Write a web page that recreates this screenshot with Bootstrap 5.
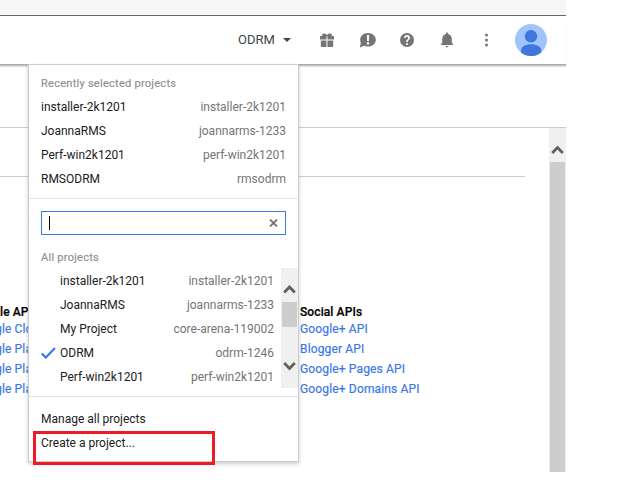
<!DOCTYPE html>
<html lang="en">
<head>
<meta charset="utf-8">
<title>API Manager</title>
<link href="https://cdn.jsdelivr.net/npm/bootstrap@5.3.0/dist/css/bootstrap.min.css" rel="stylesheet">
<style>
body{font:12px/20px Roboto,"Liberation Sans",sans-serif;color:#212121;background:#fff;overflow:hidden}
a{color:#3b78e7;text-decoration:none}
svg{display:block}
.console{width:566px;height:472px}
.browser-strip{height:16px;background:#f6f6f6;border-bottom:1px solid #666}
.topbar{height:48px;box-shadow:0 1px 0 #aaa,0 2px 0 #c4c4c4,0 3px 1px #e2e2e2;z-index:2;padding:0 19px 0 238px}
.picker{font-size:13px;color:#444;width:82px}
.caret{border:4.5px solid transparent;border-top-color:#444;border-bottom:0;margin-left:8px}
.tools{color:#757575;width:195px}
.tool{width:40px;flex:none}
.titlebar{height:64px;border-bottom:1px solid #ccc}
.pane{height:344px}
.section-rule{height:49px;width:525px;border-bottom:1px solid #ccc}
.api-lists{padding-top:128px}
.api-lists a{letter-spacing:.15px;-webkit-text-stroke:.2px #3b78e7}
.api-lists h6{font-size:12px;font-weight:500;line-height:14px;letter-spacing:.1px;color:#000;margin:0;-webkit-text-stroke:.2px #000}
.api-left{width:300px;white-space:nowrap}
.api-left a{margin-left:-5px}
.main-scroll{width:17px;background:#f0f0f0;padding:0 1px}
.thumb{background:#cdcdcd}
.main-scroll .arrow{height:34px;padding:17px 0 0 1px}
.project-menu{left:28px;top:64px;width:271px;height:398px;background:#fff;border:1px solid #ccc;box-shadow:0 2px 4px rgba(0,0,0,.2);z-index:3;line-height:24px}
.menu-label{font-size:11px;font-weight:400;letter-spacing:.27px;color:#8e8e8e;line-height:20px;-webkit-text-stroke:.15px #8e8e8e}
.recent{padding:9px 12px 7px;height:134px;border-bottom:1px solid #e5e5e5}
.recent .menu-label{margin-bottom:1px}
.pid{color:#757575}
.filter{margin:12px 12px 0;height:24px;border:1px solid #3b78e7;padding:0 7px}
.cursor{width:1px;height:14px;background:#000}
.all-label{padding:13px 12px 0;height:33px}
.all-list{height:120px}
.tick{width:31px;padding-left:12px}
.rows{padding:1px 7px 0 0}
.list-scroll{width:17px;background:#f0f0f0;padding:0 1px}
.list-scroll .thumb{height:25px}
.actions{margin-top:8px;border-top:1px solid #e5e5e5;padding:10px 12px 0}
.highlight-box{left:33px;top:431px;width:182px;height:34px;border:3px solid #ed1c24;z-index:4}
</style>
</head>
<body>
<div class="console position-relative">
  <div class="browser-strip"></div>
  <header class="topbar position-relative d-flex align-items-center bg-white">
    <div class="picker d-flex align-items-center">ODRM<span class="caret"></span></div>
    <div class="tools d-flex align-items-center">
      <div class="tool"><svg width="14" height="14" viewBox="0 0 14 14" fill="currentColor"><path d="M0 3h2.200Q1.500 1 3.500.6 5.200.3 7 2 8.800.3 10.500.6 12.500 1 11.800 3H14v3.500H7.500V3.200h-1v3.300H0zM.8 7.500h5.700V14H2Q.8 14 .8 12.800zM7.500 7.500h5.700v5.300Q13.200 14 12 14H7.500z"/></svg></div>
      <div class="tool"><svg width="16" height="16" viewBox="0.600 0 16 16"><path fill="currentColor" d="M8.600 1C13 1 16.400 3.900 16.400 7.800s-3.400 6.800-7.800 6.800c-1.500 0-2.700-.3-3.900-.8L.4 15.500l1-4.500C1 10 .8 9 .8 7.800.8 3.900 4.200 1 8.600 1z"/><path fill="#fff" d="M7.500 3h2.200l-.2 6H7.700zM7.500 10.200h2.200v2.200H7.500z"/></svg></div>
      <div class="tool"><svg width="14" height="14" viewBox="2 2 20 20" fill="currentColor"><path d="M12 2a10 10 0 1 0 0 20 10 10 0 0 0 0-20zm1.200 17.200h-2.500v-2.500h2.500zm2.070-7.950-.9.920C13.650 12.900 13.200 13.500 13.200 15h-2.500v-.5c0-1.100.450-2.100 1.170-2.830l1.240-1.260c.370-.36.590-.86.590-1.410a1.700 1.700 0 1 0-3.400 0H7.800a4.200 4.200 0 1 1 8.400 0c0 .880-.36 1.680-.93 2.250z"/></svg></div>
      <div class="tool"><svg width="14" height="16" viewBox="0 0 14 16" fill="currentColor"><path d="M7 .5c.7 0 1.100.5 1.100 1.200v.4c2.400.6 3.700 2.500 3.700 4.900v3.800L13 12v1H1v-1l1.200-1.200V7c0-2.400 1.300-4.300 3.700-4.900v-.4C5.900 1 6.300.5 7 .5zM5.500 14h3q-.2 1.300-1.500 1.300T5.500 14z"/></svg></div>
      <div class="tool ps-1"><svg width="5" height="14" viewBox="0 0 5 14" fill="currentColor"><circle cx="2.500" cy="2" r="1.500"/><circle cx="2.500" cy="7" r="1.500"/><circle cx="2.500" cy="12" r="1.500"/></svg></div>
    </div>
    <svg class="flex-shrink-0" width="32" height="32" viewBox="0 0 32 32"><circle cx="16" cy="16" r="16" fill="#9fc5fc"/><circle cx="16" cy="12.300" r="6.200" fill="#4077dd"/><path fill="#4077dd" d="M6 28.500v-2.300C6.500 22.500 10 20.300 16 20.300s9.800 2.200 10.300 5.900v2.200Q22 32 16 32T6 28.500z"/></svg>
  </header>
  <div class="titlebar"></div>
  <main class="pane d-flex">
    <div class="flex-grow-1">
      <div class="section-rule"></div>
      <div class="api-lists d-flex">
        <div class="api-left">
          <h6>le AP</h6>
          <a class="d-block" href="#">gle Clo</a><a class="d-block" href="#">gle Pla</a><a class="d-block" href="#">gle Pla</a><a class="d-block" href="#">gle Pla</a>
        </div>
        <div>
          <h6>Social APIs</h6>
          <a class="d-block" href="#">Google+ API</a><a class="d-block" href="#">Blogger API</a><a class="d-block" href="#">Google+ Pages API</a><a class="d-block" href="#">Google+ Domains API</a>
        </div>
      </div>
    </div>
    <div class="main-scroll d-flex flex-column">
      <div class="arrow"><svg width="13" height="10" viewBox="0 0 13 10"><path d="M1.200 8l5.300-5.500L11.800 8" fill="none" stroke="#606060" stroke-width="2.800"/></svg></div>
      <div class="thumb flex-grow-1"></div>
    </div>
  </main>

  <div class="project-menu position-absolute">
    <div class="recent">
      <div class="menu-label">Recently selected projects</div>
      <div class="d-flex justify-content-between"><span>installer-2k1201</span><span class="pid">installer-2k1201</span></div>
      <div class="d-flex justify-content-between"><span>JoannaRMS</span><span class="pid">joannarms-1233</span></div>
      <div class="d-flex justify-content-between"><span>Perf-win2k1201</span><span class="pid">perf-win2k1201</span></div>
      <div class="d-flex justify-content-between"><span>RMSODRM</span><span class="pid">rmsodrm</span></div>
    </div>
    <div class="filter d-flex align-items-center justify-content-between">
      <span class="cursor"></span>
      <svg width="9" height="8" viewBox="0 0 9 8"><path d="M1 .5l7 7M8 .5l-7 7" stroke="#757575" stroke-width="1.800"/></svg>
    </div>
    <div class="all-label menu-label">All projects</div>
    <div class="all-list d-flex">
      <div class="rows flex-grow-1">
        <div class="d-flex"><span class="tick"></span><span>installer-2k1201</span><span class="pid ms-auto">installer-2k1201</span></div>
        <div class="d-flex"><span class="tick"></span><span>JoannaRMS</span><span class="pid ms-auto">joannarms-1233</span></div>
        <div class="d-flex"><span class="tick"></span><span>My Project</span><span class="pid ms-auto">core-arena-119002</span></div>
        <div class="d-flex"><span class="tick d-flex align-items-center"><svg width="15" height="12" viewBox="0 0 15 12"><path d="M.8 6.500l4 4L14 1" fill="none" stroke="#3b78e7" stroke-width="2.200"/></svg></span><span>ODRM</span><span class="pid ms-auto">odrm-1246</span></div>
        <div class="d-flex"><span class="tick"></span><span>Perf-win2k1201</span><span class="pid ms-auto">perf-win2k1201</span></div>
      </div>
      <div class="list-scroll d-flex flex-column">
        <svg class="flex-shrink-0" width="15" height="34" viewBox="0 0 15 34"><path d="M2.200 24.500l5.300-5.500 5.300 5.500" fill="none" stroke="#606060" stroke-width="2.800"/></svg>
        <div class="thumb"></div>
        <svg class="mt-auto" width="15" height="34" viewBox="0 0 15 34"><path d="M2.200 9l5.300 5.500L12.800 9" fill="none" stroke="#606060" stroke-width="2.800"/></svg>
      </div>
    </div>
    <div class="actions">
      <div>Manage all projects</div>
      <div>Create a project...</div>
    </div>
  </div>
  <div class="highlight-box position-absolute"></div>
</div>
<script src="https://cdn.jsdelivr.net/npm/bootstrap@5.3.0/dist/js/bootstrap.bundle.min.js"></script>
</body>
</html>
